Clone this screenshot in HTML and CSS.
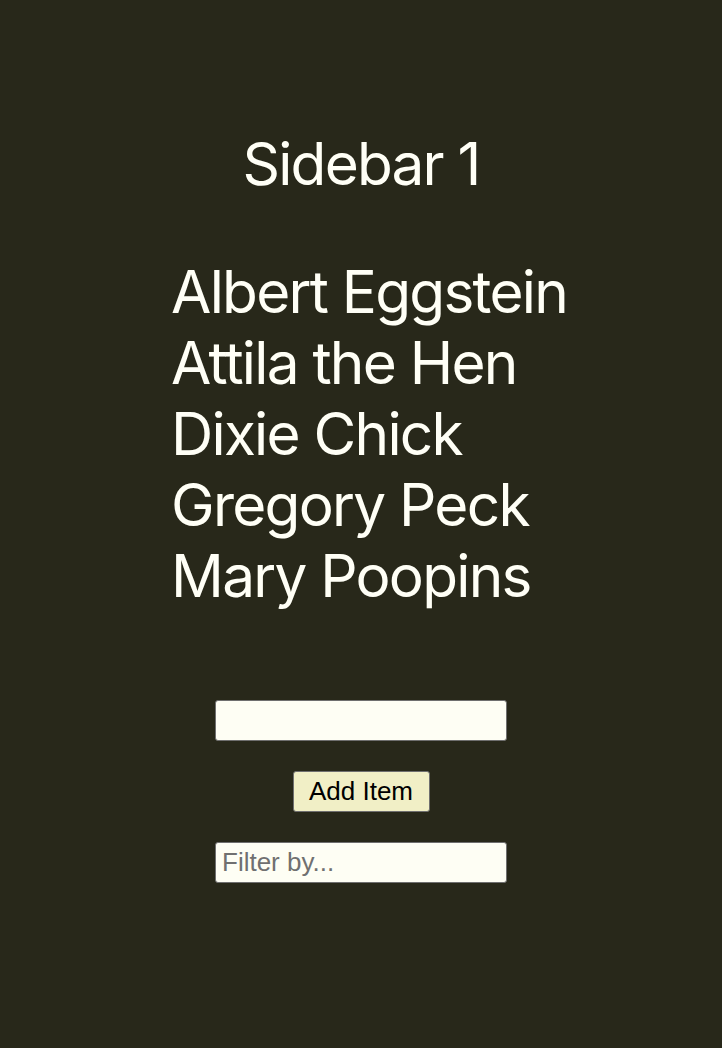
FILE: index.html
```html
<!DOCTYPE html>
<html>
<head>
<meta charset="utf-8">
<link rel="stylesheet" href="styles.css">
</head>
<body>
<div class="sidebar">
  <h1 class="title">Sidebar 1</h1>
  <ul class="list">
    <li>Albert Eggstein</li>
    <li>Attila the Hen</li>
    <li>Dixie Chick</li>
    <li>Gregory Peck</li>
    <li>Mary Poopins</li>
  </ul>
  <form class="form">
    <input class="field" type="text">
    <button class="btn" type="button">Add Item</button>
    <input class="field" type="text" placeholder="Filter by...">
  </form>
</div>
</body>
</html>
```

FILE: styles.css
```css
html, body {
  margin: 0;
  padding: 0;
  background: #28281a;
}
body {
  width: 722px;
  height: 1048px;
  font-family: Inter, "Noto Sans", sans-serif;
  color: #fffff6;
}
.sidebar {
  display: flex;
  flex-direction: column;
  align-items: center;
  padding-top: 128px;
}
.title {
  margin: 0;
  font-size: 58.5px;
  font-weight: 400;
  line-height: 71px;
  letter-spacing: -1.8px;
}
.list {
  list-style: none;
  margin: 57px 0 0 0;
  padding: 0 0 0 16px;
  font-size: 58.5px;
  line-height: 71px;
  letter-spacing: -1.75px;
}
.list li {
  white-space: nowrap;
}
.form {
  display: flex;
  flex-direction: column;
  align-items: center;
  gap: 30px;
  margin-top: 89px;
}
.field {
  box-sizing: border-box;
  width: 292px;
  height: 41px;
  border: 1px solid #6f6f6f;
  border-radius: 3px;
  background: #fefef4;
  font-family: "Liberation Sans", Arial, sans-serif;
  font-size: 26px;
  padding: 2px 6px;
  color: #000;
}
.field::placeholder {
  color: #707070;
}
.btn {
  box-sizing: border-box;
  width: 137px;
  height: 41px;
  border: 1px solid #6f6f6f;
  border-radius: 3px;
  background: #f1efc6;
  font-family: "Liberation Sans", Arial, sans-serif;
  font-size: 26px;
  color: #000;
  padding: 0;
}
```
